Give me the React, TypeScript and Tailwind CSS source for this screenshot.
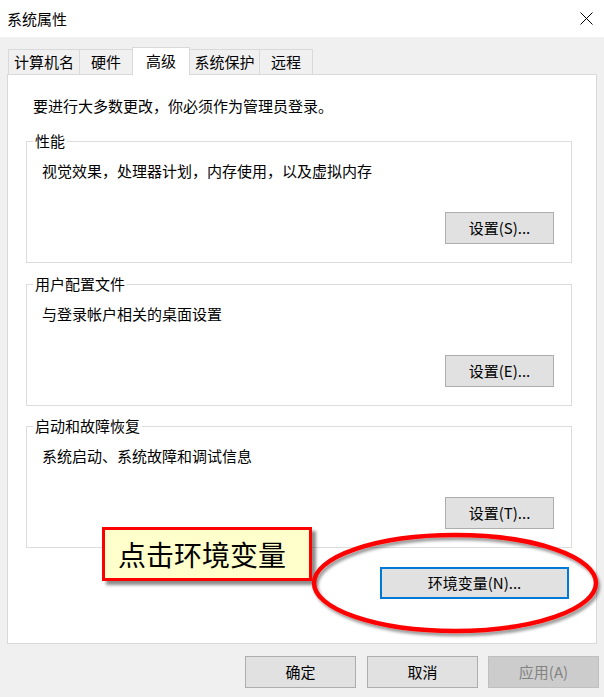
import React from "react";

const font = { fontFamily: '"Noto Sans CJK SC", "Noto Sans", sans-serif' };

function Btn({ label, className = "" }: { label: string; className?: string }) {
  return (
    <div
      className={
        "flex items-center justify-center h-[32px] border border-[#adadad] bg-[#e1e1e1] text-[15px] leading-[20px] text-black " +
        className
      }
    >
      {label}
    </div>
  );
}

function Group({ title, desc, btn, mt }: { title: string; desc: string; btn: string; mt: string }) {
  return (
    <fieldset className={"ml-[18px] w-[546px] border border-[#dcdcdc] p-0 m-0 " + mt}>
      <legend className="ml-[6px] px-[2px] text-[15px] leading-[20px] text-black">{title}</legend>
      <div className="pl-[15px] mt-[10px] text-[15px] leading-[20px] text-black">{desc}</div>
      <div className="flex justify-end pr-[17px] mt-[31px] pb-[18px]">
        <Btn label={btn} className="w-[109px]" />
      </div>
    </fieldset>
  );
}

export default function App() {
  return (
    <div className="relative w-[604px] h-[697px] bg-[#f0f0f0] overflow-hidden" style={font}>
      {/* title bar */}
      <div className="h-[37px] bg-white flex items-center justify-between pl-[7px] pr-[11px]">
        <span className="text-[15px] leading-[20px] text-black">系统属性</span>
        <svg width="13" height="13" viewBox="0 0 13 13">
          <path d="M0.5 0.5 L12.5 12.5 M12.5 0.5 L0.5 12.5" stroke="#000" strokeWidth="1" />
        </svg>
      </div>

      {/* tabs */}
      <div className="mt-[10px] flex items-end pl-[8px] h-[27px]">
        <div className="w-[72px] h-[25px] border border-b-0 border-[#d9d9d9] bg-[#f0f0f0] flex items-center justify-center text-[15px] leading-[20px] text-black">
          计算机名
        </div>
        <div className="w-[54px] -ml-px h-[25px] border border-b-0 border-[#d9d9d9] bg-[#f0f0f0] flex items-center justify-center text-[15px] leading-[20px] text-black">
          硬件
        </div>
        <div className="relative z-10 w-[58px] -ml-px h-[28px] -mb-px border border-b-0 border-[#d9d9d9] bg-white flex items-start justify-center pt-[3px] text-[15px] leading-[20px] text-black">
          高级
        </div>
        <div className="w-[71px] -ml-px h-[25px] border border-b-0 border-[#d9d9d9] bg-[#f0f0f0] flex items-center justify-center text-[15px] leading-[20px] text-black">
          系统保护
        </div>
        <div className="w-[54px] -ml-px h-[25px] border border-b-0 border-[#d9d9d9] bg-[#f0f0f0] flex items-center justify-center text-[15px] leading-[20px] text-black">
          远程
        </div>
      </div>

      {/* panel */}
      <div className="ml-[7px] w-[590px] h-[570px] border border-[#d9d9d9] bg-white flex flex-col">
        <div className="mt-[21px] pl-[25px] text-[15px] leading-[20px] text-black">
          要进行大多数更改，你必须作为管理员登录。
        </div>
        <Group title="性能" desc="视觉效果，处理器计划，内存使用，以及虚拟内存" btn="设置(S)..." mt="mt-[15px]" />
        <Group title="用户配置文件" desc="与登录帐户相关的桌面设置" btn="设置(E)..." mt="mt-[11px]" />
        <Group title="启动和故障恢复" desc="系统启动、系统故障和调试信息" btn="设置(T)..." mt="mt-[10px]" />
        <div className="mt-[19px] ml-[372px]">
          <div className="flex items-center justify-center w-[189px] h-[32px] border-2 border-[#0078d7] bg-[#e1e1e1] text-[15px] leading-[20px] text-black">
            环境变量(N)...
          </div>
        </div>
      </div>

      {/* bottom buttons */}
      <div className="mt-[12px] flex pl-[245px]">
        <Btn label="确定" className="w-[111px]" />
        <Btn label="取消" className="w-[111px] ml-[11px]" />
        <div className="ml-[10px] flex items-center justify-center w-[111px] h-[32px] border border-[#bfbfbf] bg-[#cccccc] text-[15px] leading-[20px] text-[#838383]">
          应用(A)
        </div>
      </div>

      {/* annotation: callout */}
      <div className="absolute left-[102px] top-[527px] w-[210px] h-[54px] border-[3px] border-[#ff0000] bg-[#ffffcc] shadow-[4px_4px_3px_rgba(0,0,0,0.45)] flex items-center pl-[13px]">
        <span className="text-[28px] leading-[32px] text-black">点击环境变量</span>
      </div>

      {/* annotation: ellipse */}
      <svg className="absolute left-[300px] top-[520px]" width="304" height="130" viewBox="0 0 304 130">
        <defs>
          <filter id="sh" x="-10%" y="-20%" width="120%" height="150%">
            <feDropShadow dx="2" dy="3" stdDeviation="1.5" floodColor="#000" floodOpacity="0.4" />
          </filter>
        </defs>
        <ellipse cx="155" cy="63" rx="141" ry="48" fill="none" stroke="#ff0000" strokeWidth="4.5" filter="url(#sh)" />
      </svg>
    </div>
  );
}
